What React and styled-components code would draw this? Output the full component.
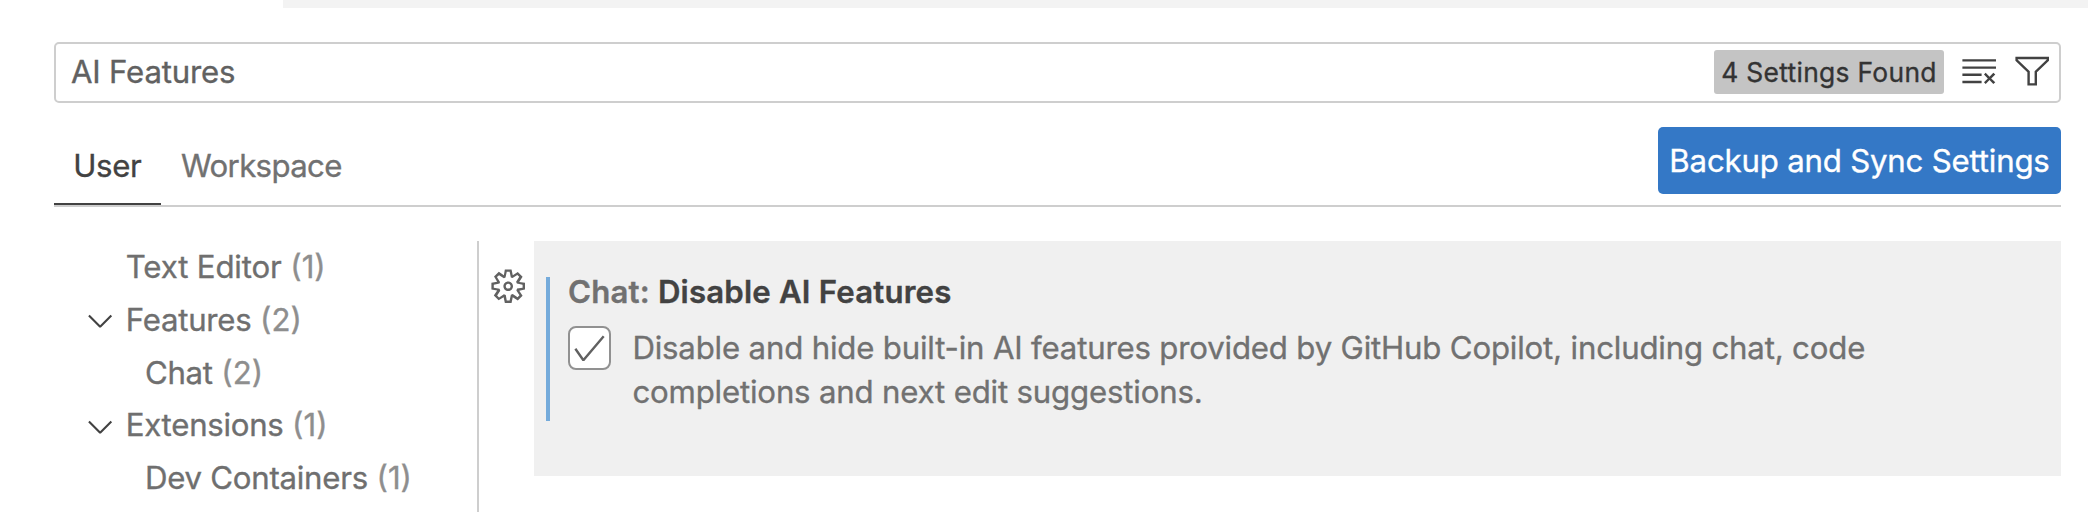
import React from 'react';
import styled, { createGlobalStyle } from 'styled-components';
import { VscCheck, VscChevronDown, VscClearAll, VscFilter, VscGear } from 'react-icons/vsc';

const GlobalStyle = createGlobalStyle`
  * { box-sizing: border-box; }
  body {
    margin: 0;
    background: #fff;
    color: #616161;
    font-family: Inter, "Liberation Sans", sans-serif;
    font-size: 31.2px;
    -webkit-font-smoothing: antialiased;
    -webkit-text-stroke: 0.35px;
  }
`;

const Editor = styled.main`
  display: flex;
  flex-direction: column;
  width: 2088px;
  height: 512px;
  overflow: hidden;
`;

const TabStrip = styled.div`
  flex: none;
  height: 8px;
  margin-left: 283px;
  background: #f3f3f3;
`;

const Header = styled.header`
  flex: none;
  margin: 34px 27px 0 54px;
`;

const SearchBox = styled.div`
  display: flex;
  align-items: center;
  height: 61px;
  padding: 0 8px 2px 15px;
  border: 2px solid #cecece;
  border-radius: 5px;
`;

const Query = styled.span`
  flex: 1;
  letter-spacing: -0.18px;
`;

const ResultCount = styled.span`
  display: flex;
  align-items: center;
  justify-content: center;
  width: 230px;
  height: 44px;
  margin: 1px 15.6px 0 0;
  border-radius: 3px;
  background: #c4c4c4;
  color: #333;
  font-size: 26.4px;
  letter-spacing: 0.3px;
  line-height: 44px;
  white-space: nowrap;
`;

const IconButton = styled.button`
  display: flex;
  padding: 0;
  border: 0;
  background: none;
  color: ${(p) => p.$color || '#424242'};
  font-size: 38.4px;
  margin: ${(p) => p.$margin || 0};
`;

const TabBar = styled.nav`
  display: flex;
  align-items: flex-start;
  height: 104px;
  padding-top: 24px;
  border-bottom: 2px solid #cecece;
`;

const Tab = styled.button`
  height: 78px;
  padding: 1px ${(p) => p.$right}px 0 ${(p) => p.$left}px;
  border: 0;
  border-bottom: 2px solid ${(p) => (p.$active ? '#424242' : 'transparent')};
  background: none;
  color: ${(p) => (p.$active ? '#424242' : '#717171')};
  font: inherit;
  letter-spacing: ${(p) => p.$tracking}px;
  line-height: 76px;
`;

const SyncButton = styled.button`
  width: 403px;
  height: 67px;
  margin-left: auto;
  padding: 1px 0 0;
  border: 0;
  border-radius: 5px;
  background: #3478c6;
  color: #fff;
  font: inherit;
  letter-spacing: -0.194px;
  line-height: 67px;
  white-space: nowrap;
`;

const Body = styled.div`
  display: flex;
  flex: 1;
  min-height: 0;
  padding: 34px 27px 0 0;
`;

const Tree = styled.ul`
  width: 477px;
  margin: 0;
  padding: 0;
  list-style: none;
`;

const TreeRow = styled.li`
  display: flex;
  align-items: center;
  height: 52.8px;
  padding-left: ${(p) => (p.$depth ? 100 : 80.8)}px;
  line-height: 52.8px;
  white-space: nowrap;
  color: #6f6f6f;
`;

const Twistie = styled.span`
  display: flex;
  width: 45px;
  color: #424242;
  font-size: 38.4px;
`;

const TreeLabel = styled.span`
  letter-spacing: ${(p) => p.$tracking}px;
`;

const Count = styled.span`
  margin-left: 8.6px;
  color: #8e8e8e;
`;

const Results = styled.section`
  display: flex;
  align-items: flex-start;
  flex: 1;
  border-left: 2px solid #cecece;
`;

const GearColumn = styled.div`
  display: flex;
  justify-content: center;
  width: 55px;
  padding: 25.6px 0 0 3px;
`;

const Setting = styled.article`
  flex: 1;
  height: 235px;
  padding: 36px 12px 0;
  background: #f0f0f0;
`;

const SettingContent = styled.div`
  height: 144px;
  padding-left: 18px;
  border-left: 4px solid #75abdb;
`;

const Title = styled.h2`
  margin: 0;
  color: #424242;
  font-size: 31.2px;
  font-weight: 600;
  letter-spacing: 0.18px;
  line-height: 30px;
  white-space: pre;
`;

const Category = styled.span`
  color: #717171;
`;

const Option = styled.div`
  display: flex;
  align-items: flex-start;
  margin-top: 19px;
`;

const Checkbox = styled.span`
  display: flex;
  align-items: center;
  justify-content: center;
  flex: none;
  width: 43px;
  height: 44px;
  border: 2px solid #919191;
  border-radius: 8px;
  background: #fff;
  color: #616161;
  font-size: 38.4px;

  svg { flex: none; }
`;

const Description = styled.p`
  width: 1270px;
  margin: 0 0 0 21.4px;
  color: #717171;
  letter-spacing: -0.182px;
  line-height: 44px;
`;

const sections = [
  { label: 'Text Editor', count: 1, tracking: -0.15 },
  { label: 'Features', count: 2, open: true, tracking: -0.25 },
  { label: 'Chat', count: 2, depth: 1, tracking: -0.3 },
  { label: 'Extensions', count: 1, open: true, tracking: -0.28 },
  { label: 'Dev Containers', count: 1, depth: 1, tracking: -0.26 },
];

export default function App() {
  return (
    <Editor>
      <GlobalStyle />
      <TabStrip />
      <Header>
        <SearchBox>
          <Query>AI Features</Query>
          <ResultCount>4 Settings Found</ResultCount>
          <IconButton aria-label="Clear settings search" $margin="0 14.6px 0 0">
            <VscClearAll />
          </IconButton>
          <IconButton aria-label="Filter settings">
            <VscFilter />
          </IconButton>
        </SearchBox>
        <TabBar>
          <Tab $active $left={19.2} $right={19.6} $tracking={-0.35}>User</Tab>
          <Tab $left={20} $right={20} $tracking={-0.64}>Workspace</Tab>
          <SyncButton>Backup and Sync Settings</SyncButton>
        </TabBar>
      </Header>
      <Body>
        <Tree>
          {sections.map((s) => (
            <TreeRow key={s.label} $depth={s.depth}>
              <Twistie>{s.open && <VscChevronDown />}</Twistie>
              <TreeLabel $tracking={s.tracking}>{s.label}</TreeLabel>
              <Count>({s.count})</Count>
            </TreeRow>
          ))}
        </Tree>
        <Results>
          <GearColumn>
            <IconButton aria-label="More actions" $color="#616161">
              <VscGear />
            </IconButton>
          </GearColumn>
          <Setting>
            <SettingContent>
              <Title><Category>Chat: </Category>Disable AI Features</Title>
              <Option>
                <Checkbox><VscCheck /></Checkbox>
                <Description>
                  Disable and hide built-in AI features provided by GitHub Copilot, including chat, code
                  completions and next edit suggestions.
                </Description>
              </Option>
            </SettingContent>
          </Setting>
        </Results>
      </Body>
    </Editor>
  );
}
